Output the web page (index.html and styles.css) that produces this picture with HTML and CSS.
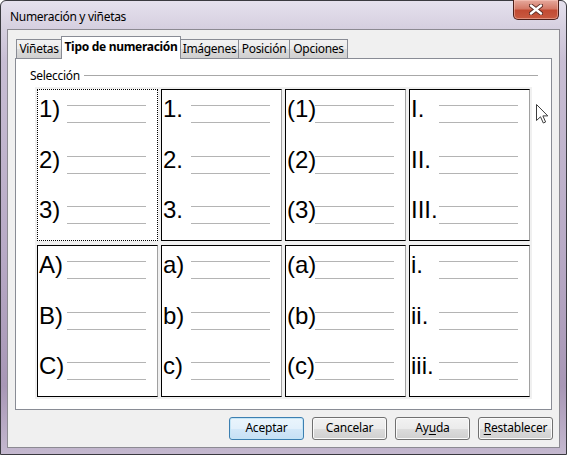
FILE: index.html
```html
<!DOCTYPE html>
<html lang="es">
<head>
<meta charset="utf-8">
<title>Numeración y viñetas</title>
<link rel="stylesheet" href="styles.css">
</head>
<body>
<div class="window">
  <div class="titlebar">
    <span class="title">Numeración y viñetas</span>
    <div class="close">
      <svg width="14" height="11" viewBox="0 0 14 11">
        <path d="M2 1.5 L12 9.5 M12 1.5 L2 9.5" stroke="#5a2a22" stroke-width="4.2" stroke-linecap="round" fill="none"/>
        <path d="M2 1.5 L12 9.5 M12 1.5 L2 9.5" stroke="#ffffff" stroke-width="2.4" stroke-linecap="round" fill="none"/>
      </svg>
    </div>
  </div>
  <div class="client">
    <div class="tabs">
      <div class="tab tab-vin">Viñetas</div>
      <div class="tab tab-tipo active">Tipo de numeración</div>
      <div class="tab tab-img">Imágenes</div>
      <div class="tab tab-pos">Posición</div>
      <div class="tab tab-opc">Opciones</div>
    </div>
    <div class="panel">
      <div class="legend"><span class="legend-text">Selección</span><span class="rule"></span></div>
      <div class="valueset">
        <div class="cell selected">
          <div class="item"><span class="label">1)</span><span class="lines"></span></div>
          <div class="item"><span class="label">2)</span><span class="lines"></span></div>
          <div class="item"><span class="label">3)</span><span class="lines"></span></div>
        </div>
        <div class="cell">
          <div class="item"><span class="label">1.</span><span class="lines"></span></div>
          <div class="item"><span class="label">2.</span><span class="lines"></span></div>
          <div class="item"><span class="label">3.</span><span class="lines"></span></div>
        </div>
        <div class="cell">
          <div class="item"><span class="label">(1)</span><span class="lines"></span></div>
          <div class="item"><span class="label">(2)</span><span class="lines"></span></div>
          <div class="item"><span class="label">(3)</span><span class="lines"></span></div>
        </div>
        <div class="cell">
          <div class="item"><span class="label">I.</span><span class="lines"></span></div>
          <div class="item"><span class="label">II.</span><span class="lines"></span></div>
          <div class="item"><span class="label">III.</span><span class="lines"></span></div>
        </div>
        <div class="cell">
          <div class="item"><span class="label">A)</span><span class="lines"></span></div>
          <div class="item"><span class="label">B)</span><span class="lines"></span></div>
          <div class="item"><span class="label">C)</span><span class="lines"></span></div>
        </div>
        <div class="cell">
          <div class="item"><span class="label">a)</span><span class="lines"></span></div>
          <div class="item"><span class="label">b)</span><span class="lines"></span></div>
          <div class="item"><span class="label">c)</span><span class="lines"></span></div>
        </div>
        <div class="cell">
          <div class="item"><span class="label">(a)</span><span class="lines"></span></div>
          <div class="item"><span class="label">(b)</span><span class="lines"></span></div>
          <div class="item"><span class="label">(c)</span><span class="lines"></span></div>
        </div>
        <div class="cell">
          <div class="item"><span class="label">i.</span><span class="lines"></span></div>
          <div class="item"><span class="label">ii.</span><span class="lines"></span></div>
          <div class="item"><span class="label">iii.</span><span class="lines"></span></div>
        </div>
      </div>
    </div>
    <div class="buttons">
      <div class="btn default">Aceptar</div>
      <div class="btn">Cancelar</div>
      <div class="btn">Ay<u>u</u>da</div>
      <div class="btn"><u>R</u>establecer</div>
    </div>
  </div>
  <svg class="cursor" width="13" height="20" viewBox="0 0 13 20">
    <path d="M0.5 0.5 L0.5 16.5 L4.5 12.8 L7.3 19 L9.6 18 L6.9 11.9 L11.8 11.9 Z" fill="#ffffff" stroke="#3c3c3c" stroke-width="1"/>
  </svg>
</div>
</body>
</html>
```

FILE: styles.css
```css
html, body {
  margin: 0;
  padding: 0;
}
body {
  width: 567px;
  height: 455px;
  overflow: hidden;
  background: #ffffff;
  font-family: "Noto Sans", "Open Sans", sans-serif;
  font-size: 12px;
  color: #000;
}
.window {
  position: relative;
  box-sizing: border-box;
  width: 567px;
  height: 455px;
  border: 1px solid #3a3a40;
  border-radius: 6px 6px 0 0;
  padding: 0 7px 7px 7px;
  display: flex;
  flex-direction: column;
  background:
    linear-gradient(to bottom, rgba(230,226,238,0.95) 0px, rgba(214,208,224,0.9) 29px, rgba(200,190,212,0) 60px),
    linear-gradient(to bottom, #cdc4d8 0%, #b8aac6 55%, #a897b6 85%, #c4b8cf 100%);
}
.titlebar {
  height: 29px;
  display: flex;
  align-items: center;
  justify-content: space-between;
}
.title {
  margin-left: 2px;
  margin-top: 2px;
  letter-spacing: -0.3px;
  color: #000;
}
.close {
  align-self: flex-start;
  margin-top: -1px;
  box-sizing: border-box;
  width: 46px;
  height: 20px;
  border: 1px solid #4d1f19;
  border-top: none;
  border-radius: 0 0 5px 5px;
  background: linear-gradient(to bottom, #e6a99d 0%, #d47a68 45%, #c24b33 55%, #c85a40 100%);
  box-shadow: inset 0 0 0 1px rgba(255,210,200,0.45);
  display: flex;
  align-items: center;
  justify-content: center;
}
.client {
  flex: 1;
  background: #f0f0f0;
  box-shadow: 0 0 0 1px #8c8a92;
  display: flex;
  flex-direction: column;
  padding-top: 6px;
}
.tabs {
  height: 22px;
  display: flex;
  align-items: flex-end;
  margin-left: 8px;
  position: relative;
  z-index: 2;
}
.tab {
  box-sizing: border-box;
  height: 19px;
  border: 1px solid #898c95;
  border-bottom: none;
  margin-right: -1px;
  background: linear-gradient(to bottom, #f2f2f2 0%, #ebebeb 50%, #dddddd 51%, #cfcfcf 100%);
  text-align: center;
  line-height: 17px;
  letter-spacing: -0.3px;
  white-space: nowrap;
}
.tab.active {
  height: 23px;
  margin-bottom: -1px;
  background: #ffffff;
  font-weight: bold;
  line-height: 19px;
  position: relative;
  z-index: 3;
}
.tab-vin { width: 46px; }
.tab-tipo { width: 120px; }
.tab-img { width: 59px; }
.tab-pos { width: 52px; }
.tab-opc { width: 59px; }

.panel {
  box-sizing: border-box;
  height: 352px;
  margin: 0 7px;
  background: #ffffff;
  border: 1px solid #898c95;
  padding: 8px 13px 0 14px;
  position: relative;
  z-index: 1;
}
.legend {
  display: flex;
  align-items: center;
  height: 16px;
}
.legend-text {
  letter-spacing: -0.3px;
  padding-right: 4px;
}
.rule {
  flex: 1;
  height: 1px;
  background: #a8a8a8;
  margin-top: 1px;
}
.valueset {
  margin: 4px 0 0 5px;
  width: 497px;
  box-sizing: border-box;
  padding: 2px;
  background: #f0f0f0;
  display: grid;
  grid-template-columns: repeat(4, 121px);
  grid-template-rows: repeat(2, 152px);
  column-gap: 3px;
  row-gap: 4px;
}
.cell {
  box-sizing: border-box;
  background: #ffffff;
  border: 1px solid;
  border-color: #000000 #a0a0a0 #000000 #000000;
  overflow: hidden;
  font-family: "Liberation Sans", Arial, sans-serif;
  font-size: 24px;
}
.cell.selected {
  border: 1px dotted #000000;
}
.item {
  display: grid;
  grid-template-columns: 29px 79px;
  height: 50.5px;
}
.label {
  grid-row: 1;
  grid-column: 1 / 3;
  margin-top: 7px;
  margin-left: 1px;
  line-height: 24px;
  height: 24px;
  white-space: nowrap;
}
.lines {
  grid-row: 1;
  grid-column: 2;
  margin-top: 15px;
  height: 16px;
  border-top: 1px solid #b4b4b4;
  border-bottom: 1px solid #b4b4b4;
}
.buttons {
  display: flex;
  justify-content: flex-end;
  gap: 8px;
  margin: 7px 6px 0 0;
}
.btn {
  box-sizing: border-box;
  width: 75px;
  height: 23px;
  border: 1px solid #707070;
  border-radius: 3px;
  background: linear-gradient(to bottom, #f2f2f2 0%, #ebebeb 50%, #dddddd 51%, #cfcfcf 100%);
  box-shadow: inset 0 0 0 1px #fbfbfb;
  text-align: center;
  line-height: 20px;
  letter-spacing: -0.2px;
}
.btn.default {
  border-color: #3c7fb1;
  background: linear-gradient(to bottom, #eaf5fc 0%, #e2f0fb 50%, #d3e8f8 51%, #c6e0f5 100%);
  box-shadow: inset 0 0 0 1px #c4e5f6;
}
.btn u {
  text-decoration-thickness: 1px;
  text-underline-offset: 2px;
}
.cursor {
  position: absolute;
  left: 535px;
  top: 103px;
  z-index: 10;
}
```
